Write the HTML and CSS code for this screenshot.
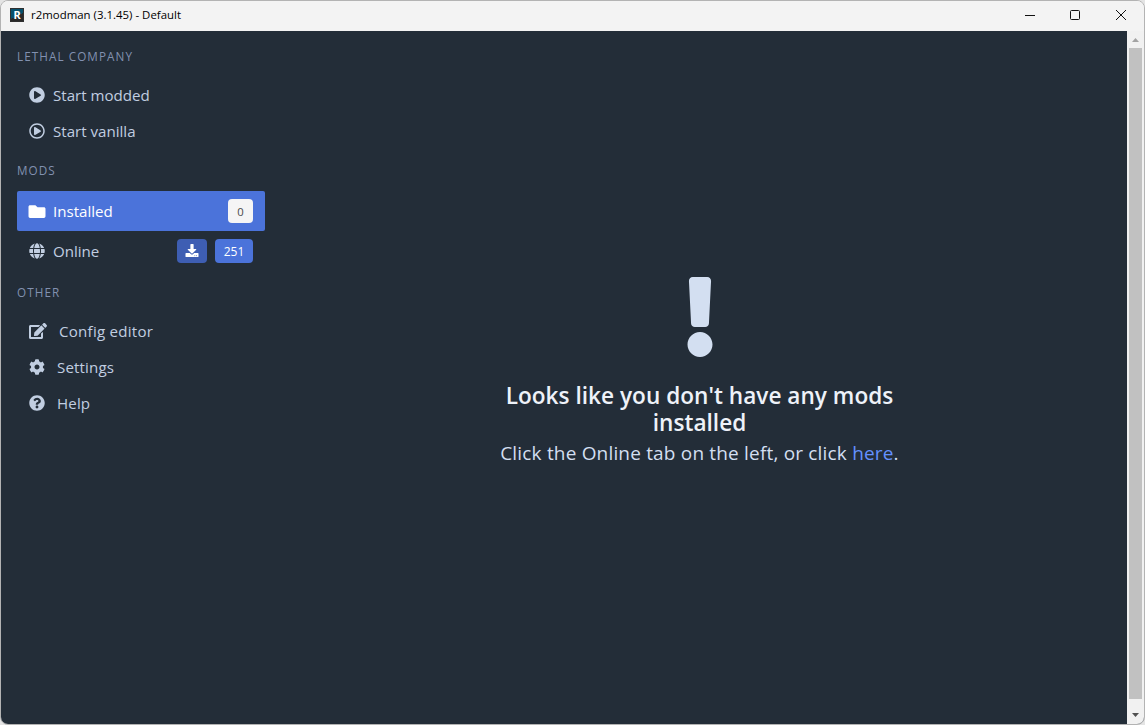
FILE: index.html
```html
<!DOCTYPE html>
<html lang="en">
<head>
<meta charset="utf-8">
<title>r2modman (3.1.45) - Default</title>
<link rel="stylesheet" href="styles.css">
</head>
<body>
<div class="window">
  <header class="titlebar">
    <span class="app-icon">R</span>
    <span class="app-title">r2modman (3.1.45) - Default</span>
    <div class="controls">
      <svg width="12" height="12" viewBox="0 0 12 12"><path d="M1 6.5h10"/></svg>
      <svg width="12" height="12" viewBox="0 0 12 12"><rect x="1.5" y="1.5" width="9" height="9" rx="1"/></svg>
      <svg width="12" height="12" viewBox="0 0 12 12"><path d="M1 1l10 10M11 1L1 11"/></svg>
    </div>
  </header>
  <div class="body">
    <aside class="menu">
      <p class="label">Lethal Company</p>
      <ul class="list">
        <li class="item"><svg class="icon" viewBox="0 0 512 512"><path d="M256 8C119 8 8 119 8 256s111 248 248 248 248-111 248-248S393 8 256 8zm115.7 272l-176 101c-15.8 8.8-35.7-2.5-35.7-21V152c0-18.4 19.8-29.8 35.7-21l176 107c16.4 9.2 16.4 32.9 0 42z"/></svg><span>Start modded</span></li>
        <li class="item"><svg class="icon" viewBox="0 0 512 512"><path d="M371.7 238l-176-107c-15.8-8.8-35.7 2.5-35.7 21v208c0 18.4 19.8 29.8 35.7 21l176-101c16.4-9.1 16.4-32.8 0-42zM504 256C504 119 393 8 256 8S8 119 8 256s111 248 248 248 248-111 248-248zm-448 0c0-110.5 89.5-200 200-200s200 89.5 200 200-89.5 200-200 200S56 366.5 56 256z"/></svg><span>Start vanilla</span></li>
      </ul>
      <p class="label">Mods</p>
      <ul class="list">
        <li class="item tall active"><svg class="icon" viewBox="0 0 512 512"><path d="M464 128H272l-64-64H48C21.49 64 0 85.49 0 112v288c0 26.51 21.49 48 48 48h416c26.51 0 48-21.49 48-48V176c0-26.51-21.49-48-48-48z"/></svg><span>Installed</span><span class="tags"><span class="tag light">0</span></span></li>
        <li class="item tall"><svg class="icon" viewBox="0 0 496 512"><path d="M336.5 160C322 70.7 287.8 8 248 8s-74 62.7-88.5 152h177zM152 256c0 22.2 1.2 43.5 3.3 64h185.3c2.1-20.5 3.3-41.8 3.3-64s-1.2-43.5-3.3-64H155.3c-2.1 20.5-3.3 41.8-3.3 64zm324.7-96c-28.6-67.9-86.5-120.4-158-141.6 24.4 33.8 41.2 84.7 50 141.6h108zM177.2 18.4C105.8 39.6 47.8 92.1 19.3 160h108c8.7-56.9 25.5-107.8 49.9-141.6zM487.4 192H372.7c2.1 21 3.3 42.5 3.3 64s-1.2 43-3.3 64h114.6c5.5-20.5 8.6-41.8 8.6-64s-3.1-43.5-8.5-64zM120 256c0-21.5 1.2-43 3.3-64H8.6C3.2 212.5 0 233.8 0 256s3.2 43.5 8.6 64h114.6c-2-21-3.2-42.5-3.2-64zm39.5 96c14.5 89.3 48.7 152 88.5 152s74-62.7 88.5-152h-177zm159.3 141.6c71.4-21.2 129.4-73.7 158-141.6h-108c-8.8 56.9-25.6 107.8-50 141.6zM19.3 352c28.6 67.9 86.5 120.4 158 141.6-24.4-33.8-41.2-84.7-50-141.6h-108z"/></svg><span>Online</span><span class="tags"><span class="tag download"><svg width="14" height="13" viewBox="0 0 512 512"><path d="M216 0h80c13.3 0 24 10.7 24 24v168h87.7c17.8 0 26.7 21.5 14.1 34.1L269.7 378.3c-7.5 7.5-19.8 7.5-27.3 0L90.1 226.1c-12.6-12.6-3.7-34.1 14.1-34.1H192V24c0-13.3 10.7-24 24-24zm296 376v112c0 13.3-10.7 24-24 24H24c-13.3 0-24-10.7-24-24V376c0-13.3 10.7-24 24-24h146.7l49 49c20.1 20.1 52.5 20.1 72.6 0l49-49H488c13.3 0 24 10.7 24 24zm-124 88c0-11-9-20-20-20s-20 9-20 20 9 20 20 20 20-9 20-20zm64 0c0-11-9-20-20-20s-20 9-20 20 9 20 20 20 20-9 20-20z"/></svg></span><span class="tag link">251</span></span></li>
      </ul>
      <p class="label">Other</p>
      <ul class="list">
        <li class="item wide config"><svg class="icon edit" viewBox="0 0 576 512"><path d="M402.6 83.2l90.2 90.2c3.8 3.8 3.8 10 0 13.8L274.4 405.6l-92.8 10.3c-12.4 1.4-22.9-9.1-21.5-21.5l10.3-92.8L388.8 83.2c3.8-3.8 10-3.8 13.8 0zm162-22.9l-48.8-48.8c-15.2-15.2-39.9-15.2-55.2 0l-35.4 35.4c-3.8 3.8-3.8 10 0 13.8l90.2 90.2c3.8 3.8 10 3.8 13.8 0l35.4-35.4c15.2-15.3 15.2-40 0-55.2zM384 346.2V448H64V128h229.8c3.2 0 6.2-1.3 8.5-3.5l40-40c7.6-7.6 2.2-20.5-8.5-20.5H48C21.5 64 0 85.5 0 112v352c0 26.5 21.5 48 48 48h352c26.5 0 48-21.5 48-48V306.2c0-10.7-12.9-16-20.5-8.5l-40 40c-2.2 2.3-3.5 5.3-3.5 8.5z"/></svg><span>Config editor</span></li>
        <li class="item wide"><svg class="icon" viewBox="0 0 512 512"><path d="M487.4 315.7l-42.6-24.6c4.3-23.2 4.3-47 0-70.2l42.6-24.6c4.9-2.8 7.1-8.6 5.5-14-11.1-35.6-30-67.8-54.7-94.6-3.8-4.1-10-5.1-14.8-2.3L380.8 110c-17.9-15.4-38.5-27.3-60.8-35.1V25.8c0-5.6-3.9-10.5-9.4-11.7-36.7-8.2-74.3-7.8-109.2 0-5.5 1.2-9.4 6.1-9.4 11.7V75c-22.2 7.9-42.8 19.8-60.8 35.1L88.7 85.5c-4.9-2.8-11-1.9-14.8 2.3-24.7 26.7-43.6 58.9-54.7 94.6-1.7 5.4.6 11.2 5.5 14L67.3 221c-4.3 23.2-4.3 47 0 70.2l-42.6 24.6c-4.9 2.8-7.1 8.6-5.5 14 11.1 35.6 30 67.8 54.7 94.6 3.8 4.1 10 5.1 14.8 2.3l42.6-24.6c17.9 15.4 38.5 27.3 60.8 35.1v49.2c0 5.6 3.9 10.5 9.4 11.7 36.7 8.2 74.3 7.8 109.2 0 5.5-1.2 9.4-6.1 9.4-11.7v-49.2c22.2-7.9 42.8-19.8 60.8-35.1l42.6 24.6c4.9 2.8 11 1.9 14.8-2.3 24.7-26.7 43.6-58.9 54.7-94.6 1.5-5.5-.7-11.3-5.6-14.1zM256 336c-44.1 0-80-35.9-80-80s35.9-80 80-80 80 35.9 80 80-35.9 80-80 80z"/></svg><span>Settings</span></li>
        <li class="item wide"><svg class="icon" viewBox="0 0 512 512"><path d="M504 256c0 136.997-111.043 248-248 248S8 392.997 8 256C8 119.083 119.043 8 256 8s248 111.083 248 248zM262.655 90c-54.497 0-89.255 22.957-116.549 63.758-3.536 5.286-2.353 12.415 2.715 16.258l34.699 26.31c5.205 3.947 12.621 3.008 16.665-2.122 17.864-22.658 30.113-35.797 57.303-35.797 20.429 0 45.698 13.148 45.698 32.958 0 14.976-12.363 22.667-32.534 33.976C247.128 238.528 216 254.941 216 296v4c0 6.627 5.373 12 12 12h56c6.627 0 12-5.373 12-12v-1.333c0-28.462 83.186-29.647 83.186-106.667 0-58.002-60.165-102-116.531-102zM256 338c-25.365 0-46 20.635-46 46 0 25.364 20.635 46 46 46s46-20.636 46-46c0-25.365-20.635-46-46-46z"/></svg><span>Help</span></li>
      </ul>
    </aside>
    <main class="content">
      <svg class="alert" width="30" height="80" viewBox="0 0 192 512"><path d="M176 432c0 44.112-35.888 80-80 80s-80-35.888-80-80 35.888-80 80-80 80 35.888 80 80zM25.26 25.199l13.6 272C39.499 309.972 50.041 320 62.83 320h66.34c12.789 0 23.331-10.028 23.97-22.801l13.6-272C167.425 11.49 156.496 0 142.77 0H49.23C35.504 0 24.575 11.49 25.26 25.199z"/></svg>
      <h1 class="heading">Looks like you don't have any mods<br>installed</h1>
      <p class="hint">Click the Online tab on the left, or click <a class="here">here</a>.</p>
    </main>
    <div class="scrollbar">
      <svg class="up" width="17" height="17" viewBox="0 0 17 17"><path d="M5 11l3.5-4 3.5 4z"/></svg>
      <div class="thumb"></div>
      <svg class="down" width="17" height="25" viewBox="0 0 17 25"><path d="M5 14h7l-3.5 4z"/></svg>
    </div>
  </div>
</div>
</body>
</html>
```
FILE: styles.css
```css
* { box-sizing: border-box; margin: 0; padding: 0; }
body {
  width: 1145px;
  height: 725px;
  overflow: hidden;
  background: #e4e4e4;
  font-family: "Open Sans", "Noto Sans", sans-serif;
}
svg { display: block; flex: none; fill: currentColor; }
.window {
  display: flex;
  flex-direction: column;
  height: 725px;
  border: 1px solid #b3b3b3;
  border-radius: 8px;
  overflow: hidden;
  background: #f3f3f3;
}
.titlebar {
  display: flex;
  align-items: center;
  height: 30px;
  flex: none;
  padding-left: 9px;
  background: #f3f3f3;
  color: #000;
}
.app-icon {
  width: 14px;
  height: 14px;
  margin: 0 7px 2px 0;
  border: 1px solid #303030;
  background: linear-gradient(155deg, #07506c 55%, #292929 56%);
  color: #fff;
  font: bold 11px/12px "Noto Sans", sans-serif;
  text-align: center;
}
.app-title { flex: 1; height: 30px; font-size: 11.4px; line-height: 27px; letter-spacing: 0.02px; white-space: nowrap; }
.controls { display: flex; gap: 33px; padding: 0 17px 2px 0; }
.controls svg { fill: none; stroke: #111; stroke-width: 1; }
.controls svg:not(:last-child) { margin: 0 1px 0 -1px; }
.body { display: flex; flex: 1; background: #232d38; min-height: 0; }
.menu { width: 264px; padding: 16px 0 0 16px; flex: none; color: #c1cee1; }
.label {
  height: 18px;
  line-height: 18px;
  margin-bottom: 12px;
  font-size: 11.7px;
  letter-spacing: 1.08px;
  text-transform: uppercase;
  color: #8291b0;
}
.list { list-style: none; margin-bottom: 12px; }
.item { display: flex; align-items: center; height: 36px; padding: 0 12px; gap: 8px; font-size: 15.1px; line-height: 24px; white-space: nowrap; }
.item.tall { height: 40px; }
.item.wide { gap: 12px; letter-spacing: 0.15px; }
.item.config { letter-spacing: 0.25px; }
.active { background: #4b73da; color: #fff; border-radius: 2px; }
.icon { width: 16px; height: 16px; }
.active .icon { width: 18px; height: 17px; margin: 0 -1px; }
.icon.edit { width: 18px; }
.tags { display: flex; gap: 8px; margin-left: auto; }
.tag { display: flex; align-items: center; justify-content: center; height: 24px; border-radius: 4px; font-size: 12px; line-height: 25px; color: #fff; }
.tag.light { width: 25px; background: #f5f5f5; color: #4a4a4a; font-size: 11.3px; }
.tag.download { width: 30px; padding-bottom: 1px; background: #3e5eb3; }
.tag.link { width: 38px; background: #4b73da; }
.content { flex: 1; display: flex; flex-direction: column; align-items: center; padding: 246px 0 0 7px; color: #d3dff1; text-align: center; }
.heading { margin-top: 25px; font-size: 22.6px; line-height: 27px; font-weight: 600; letter-spacing: 0.02px; color: #eef2f9; white-space: nowrap; }
.hint { margin-top: 2px; font-size: 19px; line-height: 30px; letter-spacing: 0.18px; white-space: nowrap; }
.here { color: #6591ff; }
.scrollbar { display: flex; flex-direction: column; width: 17px; background: #f1f1f1; flex: none; }
.up { color: #a3a3a3; }
.thumb { flex: 1; margin: 0 2px; background: #c1c1c1; }
.down { color: #505050; }
```
